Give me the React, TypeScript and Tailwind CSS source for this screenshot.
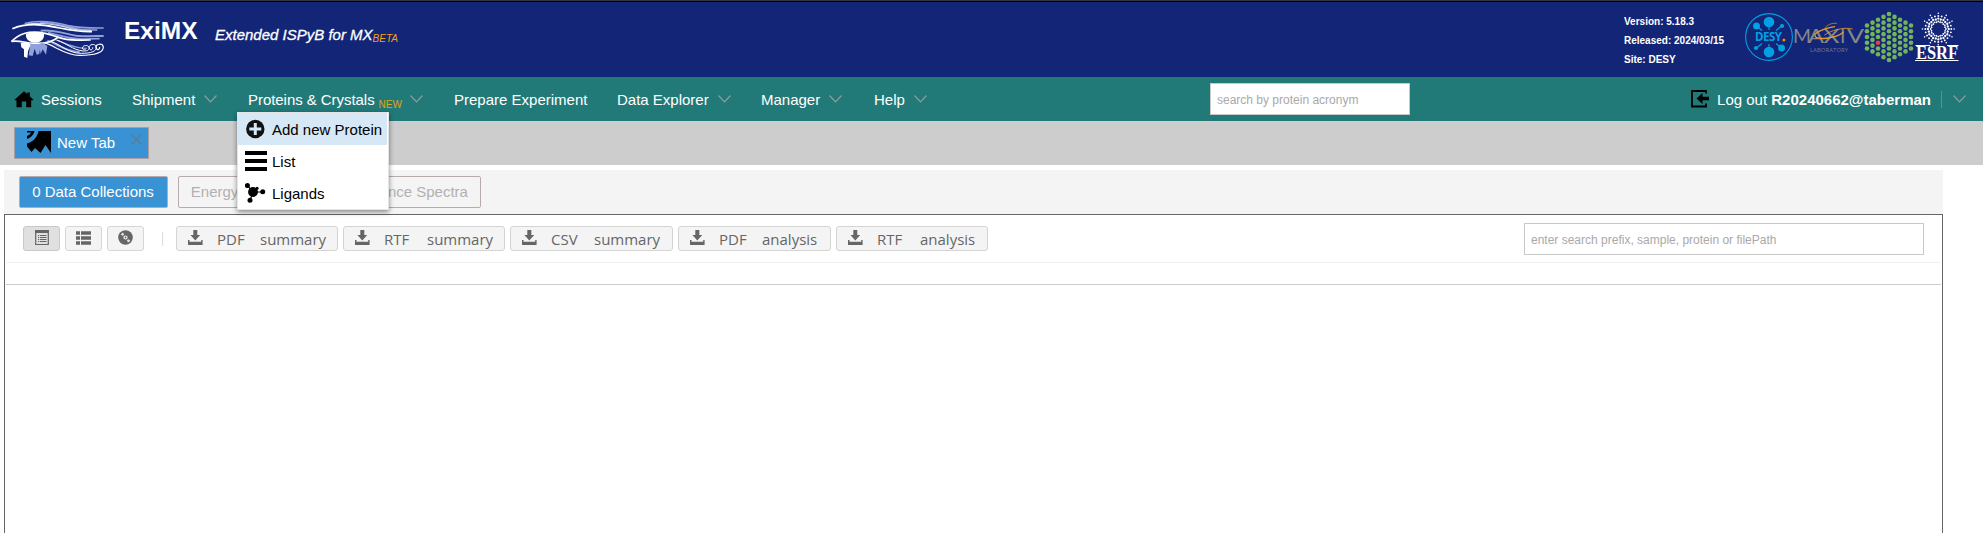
import React from "react";

const Chevron = ({ className = "" }: { className?: string }) => (
  <svg className={`h-[8px] w-[13px] shrink-0 ${className}`} viewBox="0 0 13 8" fill="none" stroke="#8f9d9d" strokeWidth="1.200">
    <path d="M0.500 0.500 L6.500 6.800 L12.500 0.500" />
  </svg>
);

const HomeIcon = () => (
  <svg className="h-[17px] w-[20px] shrink-0" viewBox="0 0 20 17">
    <path d="M10 0.2 L0.3 9 L2.5 9.4 V16.3 H7.8 V10.5 H12.2 V16.3 H17.2 V9.4 L19.7 9 L15.8 5.2 V1.5 H13.2 V2.9 Z" fill="#000" />
  </svg>
);

const EyeLogo = () => (
  <svg className="h-[40px] w-[94px] shrink-0" viewBox="9 15 282 120" fill="none">
    <g stroke="#8fa0dc" strokeWidth="5">
      <path d="M50 29 C90 17 140 24 180 35 C215 43 250 42 287 42" />
      <path d="M95 24 C140 26 180 40 210 45 C230 48 250 48 268 48" />
      <path d="M98 50 C140 46 170 60 205 65 C235 68 260 66 287 66" strokeWidth="6" />
      <path d="M120 56 C160 66 190 76 225 75 L275 74" />
      <path d="M118 80 C150 90 170 112 215 114" strokeWidth="6" />
      <path d="M140 76 C170 86 190 102 232 103" strokeWidth="4" />
    </g>
    <g stroke="#fff">
      <path d="M13 44 C50 28 100 30 145 40 C185 48 215 55 252 53" strokeWidth="5" />
      <path d="M60 30 C110 24 150 34 190 44 C215 50 235 51 250 50" strokeWidth="2.500" />
      <path d="M10 83 C35 58 60 52 95 55 C125 58 140 68 165 74 C190 80 215 79 248 78" strokeWidth="5" />
      <path d="M12 82 C35 78 50 87 80 88 C115 89 135 82 150 70" strokeWidth="5" />
      <path d="M108 86 C140 94 170 124 215 124 C250 124 286 118 286 99 C284 86 262 89 264 101 C266 110 276 108 275 99" strokeWidth="3.500" />
      <path d="M128 82 C160 92 180 118 220 118 C250 118 266 112 265 99 C262 87 242 90 243 102 C245 111 256 108 254 100" strokeWidth="3" />
      <path d="M148 79 C172 86 195 108 225 111 C240 112 246 106 243 99 C236 90 220 96 224 105 C228 110 236 106 234 101" strokeWidth="3" />
    </g>
    <path d="M54 60 C52 76 64 86 82 86 C98 86 110 75 108 59 C90 53 70 54 54 60 Z" fill="#fff" />
    <path d="M67 90 L62 124 L74 126 L80 104 L86 122 L94 120 L98 90 Z" fill="#8fa0dc" />
    <path d="M92 90 L98 120 L104 106 L114 122 L118 96 L104 86 Z" fill="#8fa0dc" />
    <path d="M38 86 L40 100 L48 106 L48 128 L58 132 L60 112 L68 92 L60 84 Z" fill="#fff" />
  </svg>
);

const DesyLogo = () => (
  <svg className="h-[50px] w-[50px] shrink-0" viewBox="-25 -25 50 50">
    <g stroke="#00a0e3" fill="none">
      <circle r="23.400" strokeWidth="1.1" />
      <path d="M0 -15 V-7 M0 7 V15 M-12.500 -11 L-7 -6.500 M12.500 -11 L7 -6.500 M-12.500 11 L-7 6.500 M12.500 11 L7 6.500" strokeWidth="1.2" />
    </g>
    <g fill="#00a0e3">
      <circle cy="-15" r="5.300" />
      <circle cy="15" r="5.300" />
      <circle cx="-12.500" cy="-11" r="3.500" />
      <circle cx="13" cy="-11" r="2.100" />
      <circle cx="-13" cy="11" r="2.100" />
      <circle cx="12.500" cy="11" r="3.500" />
    </g>
    <text x="-14" y="4.200" fontFamily="Open Sans, sans-serif" fontWeight="700" fontSize="11.500" textLength="27" fill="#00a0e3">DESY</text>
    <circle cx="14.900" cy="3" r="1.500" fill="#f28e00" />
  </svg>
);

const MaxIvLogo = () => (
  <svg className="h-[36px] w-[72px] shrink-0 overflow-visible" viewBox="1793 19 72 36">
    <g fontFamily="Lato, sans-serif" fontSize="19.500" fill="#85858c">
      <text x="1793" y="43" textLength="18" lengthAdjust="spacingAndGlyphs">M</text>
      <text x="1808" y="43" textLength="16" lengthAdjust="spacingAndGlyphs">A</text>
      <text x="1823.500" y="43" textLength="16" lengthAdjust="spacingAndGlyphs">X</text>
      <text x="1840" y="43">I</text>
      <text x="1847" y="43" textLength="17" lengthAdjust="spacingAndGlyphs">V</text>
    </g>
    <text x="1810" y="52" fontFamily="Open Sans, sans-serif" fontSize="5.800" textLength="38" fill="#777b8e">LABORATORY</text>
    <g fill="none" stroke="#e39a2c" transform="translate(1785 10) scale(0.3333)">
      <path d="M150 50 C115 56 86 68 90 78 C94 90 150 88 176 66" strokeWidth="4" />
      <path d="M118 76 C135 62 175 50 203 57" strokeWidth="2.500" />
      <path d="M120 56 C122 46 140 38 156 40" strokeWidth="2" />
    </g>
  </svg>
);

const hexDots: { x: number; y: number; red: boolean }[] = [];
for (let c = -4; c <= 4; c++) {
  const n = 9 - Math.abs(c);
  for (let i = 0; i < n; i++) {
    const r = i - (n - 1) / 2;
    hexDots.push({ x: c * 5.5, y: r * 5.75, red: c === -2 && r === 1 });
  }
}

const HexLogo = () => (
  <svg className="h-[52px] w-[50px] shrink-0" viewBox="-25 -26 50 52">
    {hexDots.map((d, i) => (
      <circle key={i} cx={d.x} cy={d.y} r="2.300" fill={d.red ? "#e8403c" : "#72b35c"} />
    ))}
  </svg>
);

const rays = Array.from({ length: 24 }, (_, i) => i * 15);

const EsrfLogo = () => (
  <svg className="h-[54px] w-[46px] shrink-0 overflow-visible" viewBox="1915 12 46 54">
    <g transform="translate(1938.300 29)" fill="#fff">
      {rays.map((a, i) => (
        <g key={a} transform={`rotate(${a})`}>
          <circle cy={i % 2 ? -7 : -7.600} r="0.900" />
          <circle cy={i % 2 ? -9.800 : -10.400} r="1.150" />
          <circle cy="-13" r="0.950" />
          {i % 2 === 0 && <circle cy="-15.800" r="0.800" />}
        </g>
      ))}
    </g>
    <path d="M1915.500 45.500 H1930 M1947 45.500 H1958.500" stroke="#fff" strokeWidth="1" />
    <rect x="1915" y="46" width="44" height="14" fill="#132577" />
    <path d="M1915 60.500 H1958.500" stroke="#fff" strokeWidth="1" />
    <text x="1916" y="58.900" fontFamily="Liberation Serif, serif" fontWeight="700" fontSize="18.500" textLength="42" lengthAdjust="spacingAndGlyphs" fill="#fff">ESRF</text>
  </svg>
);

const NavItem = ({ label, width, arrow = true }: { label: string; width: string; arrow?: boolean }) => (
  <div className={`flex shrink-0 items-center ${width}`}>
    <span className="pt-[2px]">{label}</span>
    {arrow && <Chevron className="ml-[9px]" />}
  </div>
);

const SaveIcon = () => (
  <svg className="h-[16px] w-[15px] shrink-0" viewBox="0 0 15 16" fill="#666">
    <path d="M5.300 0 H9.300 V5 H12.200 L7.300 10.500 L2.400 5 H5.300 Z" />
    <path d="M0 10 H1.500 V11.700 H13.200 V10 H14.600 V15 H0 Z" />
  </svg>
);

const ExportButton = ({ kind, what, width }: { kind: string; what: string; width: string }) => (
  <button className={`flex h-[25px] shrink-0 items-center rounded-[3px] border border-[#d4d4d4] bg-[#f4f4f4] pl-[11px] font-['Open_Sans',sans-serif] text-[15px] leading-none text-[#666] ${width}`}>
    <span className="pb-[2px]"><SaveIcon /></span>
    <span className="ml-[14px] w-[43px] pt-[2px] text-left">{kind}</span>
    <span className="pt-[2px]">{what}</span>
  </button>
);

const IconButton = ({ active = false, children }: { active?: boolean; children: React.ReactNode }) => (
  <button className={`flex h-[25px] w-[37px] shrink-0 items-center justify-center rounded-[3px] border pb-[2px] ${active ? "border-[#c8c8c8] bg-[#e0e0e0]" : "border-[#d6d6d6] bg-[#f4f4f4]"}`}>
    {children}
  </button>
);

const ProteinsMenu = () => (
  <div className="absolute left-[-11px] top-[35px] z-10 h-[98px] w-[152px] border border-[#e4e4e4] bg-white text-black shadow-[0_2px_5px_rgba(0,0,0,0.45)]">
    <div className="mr-px flex h-[32px] items-center bg-[#d6e7f5] pl-[8px]">
      <svg className="h-[20px] w-[26px] shrink-0" viewBox="0 0 26 20">
        <circle cx="9.300" cy="10" r="9.200" fill="#111" />
        <path d="M9.300 4 V16 M3.300 10 H15.300" stroke="#d6e7f5" strokeWidth="3" />
      </svg>
      <span className="whitespace-nowrap pt-[2px]">Add new Protein</span>
    </div>
    <div className="flex h-[32px] items-center pl-[7px]">
      <svg className="h-[20px] w-[27px] shrink-0" viewBox="0 0 27 20">
        <path d="M0 2 H22 M0 10 H22 M0 18 H22" stroke="#000" strokeWidth="4" />
      </svg>
      <span className="pt-[2px]">List</span>
    </div>
    <div className="flex h-[32px] items-center pl-[7px]">
      <svg className="h-[20px] w-[27px] shrink-0" viewBox="0 0 27 20">
        <path d="M2.500 2.500 L8 9 L18 9 M8 9 L5 17.500" stroke="#000" strokeWidth="1.200" fill="none" />
        <circle cx="8" cy="9" r="4.900" />
        <circle cx="2.400" cy="2.500" r="2.500" />
        <circle cx="17.700" cy="8.800" r="2.500" />
        <circle cx="5" cy="17.300" r="2.500" />
        <circle cx="12" cy="5.300" r="1.600" />
      </svg>
      <span className="pt-[2px]">Ligands</span>
    </div>
  </div>
);

export default function App() {
  return (
    <div className="flex h-[533px] w-[1983px] flex-col overflow-hidden bg-white font-['Liberation_Sans',Arial,sans-serif] text-[15px]">
      <div className="h-[2px] shrink-0 border-t border-[#333638] bg-black" />

      <header className="flex h-[75px] shrink-0 bg-[#132577] pl-[11px] text-white">
        <div className="pt-[17px]"><EyeLogo /></div>
        <h1 className="ml-[19px] w-[91px] pt-[15px] text-[24.500px] font-bold leading-[28px]">ExiMX</h1>
        <div className="flex pt-[24px] italic leading-[18px]">
          <span className="[-webkit-text-stroke:0.300px_white]">Extended ISPyB for MX</span>
          <span className="pt-[5px] text-[10px] leading-[16px] text-[#f5a30a]">BETA</span>
        </div>
        <div className="ml-auto w-[120px] shrink-0 pt-[10px] text-[10px] font-bold leading-[19px]">
          <p>Version: 5.18.3</p>
          <p>Released: 2024/03/15</p>
          <p>Site: DESY</p>
        </div>
        <div className="flex shrink-0 pr-[23px]">
          <div className="pt-[10px]"><DesyLogo /></div>
          <div className="-ml-px pt-[17px]"><MaxIvLogo /></div>
          <div className="-ml-px pt-[9px]"><HexLogo /></div>
          <div className="-mr-px ml-px pt-[10px]"><EsrfLogo /></div>
        </div>
      </header>

      <nav className="flex h-[44px] shrink-0 items-center bg-[#217a78] pl-[14px] text-white">
        <div className="flex w-[118px] shrink-0 items-center">
          <HomeIcon />
          <span className="ml-[7px] pt-[2px]">Sessions</span>
        </div>
        <NavItem label="Shipment" width="w-[116px]" />
        <div className="relative flex h-[44px] w-[206px] shrink-0 items-center">
          <span className="pt-[2px] tracking-[-0.050px]">Proteins &amp; Crystals</span>
          <span className="ml-[4px] pt-[11px] text-[10px] text-[#e0a218]">NEW</span>
          <Chevron className="ml-[8px]" />
          <ProteinsMenu />
        </div>
        <NavItem label="Prepare Experiment" width="w-[163px]" arrow={false} />
        <NavItem label="Data Explorer" width="w-[144px]" />
        <NavItem label="Manager" width="w-[113px]" />
        <NavItem label="Help" width="w-[336px]" />
        <input className="h-[32px] w-[200px] shrink-0 border border-[#c8c8c8] bg-white px-[6px] pt-[2px] text-[12px] placeholder:text-[#a9a9a9]" placeholder="search by protein acronym" />
        <div className="ml-auto flex items-center pr-[17px]">
          <svg className="h-[18px] w-[19px]" viewBox="0 0 19 18">
            <path d="M15 3.500 V1 H1 V16.500 H15 V13.500" fill="none" stroke="#000" strokeWidth="1.800" />
            <path d="M5.500 8.500 L11.500 3 V6.800 H18 V10.200 H11.500 V14 Z" />
          </svg>
          <span className="ml-[7px] pt-[2px]">Log out <b>R20240662@taberman</b></span>
          <span className="ml-[10px] h-[17px] w-px bg-[#5b9391]" />
          <Chevron className="ml-[11px]" />
        </div>
      </nav>

      <div className="flex h-[44px] shrink-0 bg-[#cdcdcd] pl-[14px] pt-[6px]">
        <div className="flex h-[32px] w-[135px] border border-[#a8a0a4] bg-[#3892d3] pl-[12px] text-white">
          <svg className="mt-[3px] h-[23px] w-[24px] shrink-0" viewBox="0 0 24 23">
            <path d="M11.500 0 H24 V22 L18.500 14 L13.500 22 L8 17 L4.500 21 L0 15.500 V12.500 C6 11 10.500 6 11.500 0 Z" />
            <path d="M0 0 H7.500 C7 3.500 3.500 7 0 8 V5 C2 4 3.500 3 4 1.500 H0 Z" />
          </svg>
          <span className="ml-[6px] leading-[30px]">New Tab</span>
          <svg className="ml-auto mr-[6px] mt-[6px] h-[11px] w-[11px] shrink-0" viewBox="0 0 11 11" stroke="#66788a" strokeWidth="1.200">
            <path d="M0.500 0.500 L10.500 10.500 M10.500 0.500 L0.500 10.500" />
          </svg>
        </div>
      </div>

      <main className="ml-[4px] mt-[5px] flex w-[1939px] flex-1 flex-col">
        <div className="flex h-[44px] shrink-0 gap-[10px] bg-[#f4f4f4] pl-[15px] pt-[6px]">
          <button className="h-[32px] w-[149px] rounded-[2px] border border-[#b8abab] bg-[#3892d3] pr-px text-white">0 Data Collections</button>
          <button className="h-[32px] w-[121px] rounded-[2px] border border-[#b8abab] pr-[2px] text-[#b1b1b1]">Energy Scans</button>
          <button className="h-[32px] w-[172px] rounded-[2px] border border-[#b8abab] text-[#b1b1b1]">Fluorescence Spectra</button>
        </div>
        <section className="flex-1 border border-b-0 border-[#666] px-px">
          <div className="flex h-[48px] items-start border-b border-[#f1f1f1] pl-[17px] pt-[11px]">
            <div className="flex gap-[5px]">
              <IconButton active>
                <svg className="h-[15px] w-[14px]" viewBox="0 0 14 15">
                  <path d="M0.700 0.500 H13.300 V14.500 H0.700 Z" fill="none" stroke="#666" strokeWidth="1.200" />
                  <path d="M0 1.500 H14" stroke="#666" strokeWidth="3" />
                  <path d="M3 5.500 H4.200 M5 5.500 H11.500 M3 7.500 H4.200 M5 7.500 H11.500 M3 9.500 H4.200 M5 9.500 H11.500 M3 11.500 H4.200 M5 11.500 H11.500" stroke="#666" />
                </svg>
              </IconButton>
              <IconButton>
                <svg className="h-[14px] w-[15px]" viewBox="0 0 15 14">
                  <path d="M0 2 H4 M5 2 H15 M0 7 H4 M5 7 H15 M0 12 H4 M5 12 H15" stroke="#666" strokeWidth="3.600" />
                </svg>
              </IconButton>
              <IconButton>
                <svg className="h-[15px] w-[15px]" viewBox="0 0 15 15">
                  <circle cx="7.500" cy="7.500" r="7.300" fill="#666" />
                  <path d="M7.500 7.500 L2.700 4.500 A5.700 5.700 0 0 1 5 2.400 Z M7.500 7.500 L12.300 10.500 A5.700 5.700 0 0 1 10 12.600 Z" fill="#e4e4e4" />
                  <circle cx="7.500" cy="7.500" r="2.900" fill="#666" />
                  <circle cx="7.500" cy="7.500" r="2.100" fill="#f4f4f4" />
                  <circle cx="7.500" cy="7.500" r="0.900" fill="#666" />
                </svg>
              </IconButton>
            </div>
            <span className="ml-[18px] mr-[13px] mt-[6px] h-[14px] w-px bg-[#ddd]" />
            <div className="flex gap-[5px]">
              <ExportButton kind="PDF" what="summary" width="w-[162px]" />
              <ExportButton kind="RTF" what="summary" width="w-[162px]" />
              <ExportButton kind="CSV" what="summary" width="w-[163px]" />
              <ExportButton kind="PDF" what="analysis" width="w-[153px]" />
              <ExportButton kind="RTF" what="analysis" width="w-[152px]" />
            </div>
            <input className="-mt-[3px] ml-auto mr-[17px] h-[32px] w-[400px] border border-[#c8c8c8] bg-white px-[6px] pt-[2px] text-[12px] placeholder:text-[#a9a9a9]" placeholder="enter search prefix, sample, protein or filePath" />
          </div>
          <div className="h-[22px] border-b border-[#ccc]" />
        </section>
      </main>
    </div>
  );
}
